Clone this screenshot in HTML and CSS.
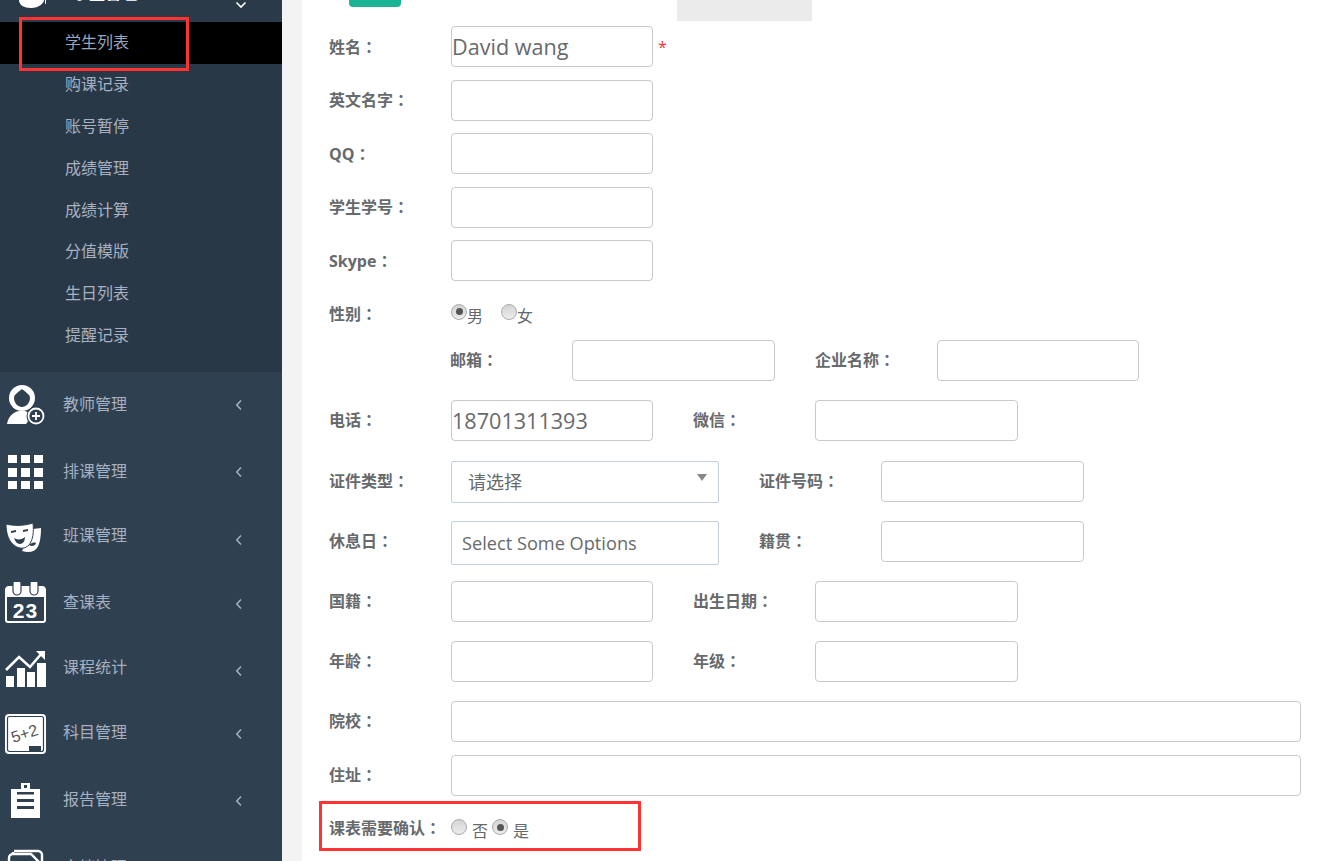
FILE: index.html
```html
<!DOCTYPE html>
<html lang="zh-CN">
<head>
<meta charset="utf-8">
<title>学生列表</title>
<link rel="stylesheet" href="styles.css">
</head>
<body>
<div class="app">
  <nav class="sidebar">
    <div class="head">
      <svg class="head-icon" width="48" height="9" viewBox="0 0 48 9"><path d="M19 0h27v4c0 0-1 0-1-1v-3h-1c0 3-5 8-13 8c-7 0-12-3-12-8z" fill="#fff"/></svg>
      <span class="head-text">学生管理</span>
      <svg class="head-arrow" width="12" height="8" viewBox="0 0 12 8"><path d="M1.5 1.5L6 6l4.5-4.5" fill="none" stroke="#fff" stroke-width="1.6"/></svg>
    </div>
    <ul class="sub">
      <li class="sub-item active">学生列表</li>
      <li class="sub-item">购课记录</li>
      <li class="sub-item">账号暂停</li>
      <li class="sub-item">成绩管理</li>
      <li class="sub-item">成绩计算</li>
      <li class="sub-item">分值模版</li>
      <li class="sub-item">生日列表</li>
      <li class="sub-item">提醒记录</li>
    </ul>
    <ul class="menu">
      <li class="item h67">
        <svg class="ico" viewBox="0 0 48 44"><circle cx="22" cy="15" r="13" fill="#fff"/><path d="M22 6c3 3 8 5 8 9c0 5-4 9-8 9s-8-4-8-9c0-4 5-6 8-9z" fill="#2f4050"/><path d="M7 41c1-7 6-12 12-13h6c4 1 6 3 7 5l-6 8z" fill="#fff"/><circle cx="36" cy="33" r="9.5" fill="#2f4050"/><circle cx="36" cy="33" r="7.5" fill="none" stroke="#fff" stroke-width="1.8"/><path d="M36 29v8M32 33h8" stroke="#fff" stroke-width="1.8"/></svg>
        <span class="item-text">教师管理</span><svg class="arrow" width="8" height="12" viewBox="0 0 8 12"><path d="M6 1.5L1.8 6L6 10.5" fill="none" stroke="#a7b1c2" stroke-width="1.5"/></svg>
      </li>
      <li class="item h67">
        <svg class="ico" viewBox="0 0 48 44"><path d="M8 5h9v8H8zM21 5h9v8h-9zM34 5h9v8h-9zM8 18h9v9H8zM21 18h9v9h-9zM34 18h9v9h-9zM8 31h9v8H8zM21 31h9v8h-9zM34 31h9v8h-9z" fill="#fff"/></svg>
        <span class="item-text">排课管理</span><svg class="arrow" width="8" height="12" viewBox="0 0 8 12"><path d="M6 1.5L1.8 6L6 10.5" fill="none" stroke="#a7b1c2" stroke-width="1.5"/></svg>
      </li>
      <li class="item h65">
        <svg class="ico" viewBox="0 0 48 44"><path d="M33 13l8-1c0 8-1 16-4 20c-3 4-8 5-15 3z" fill="#fff"/><path d="M6 8c8 2 18 2 27-1c1 9 0 17-4 22c-4 4-9 4-14 1c-6-4-9-12-9-22z" fill="#fff" stroke="#2f4050" stroke-width="1"/><path d="M11 15l5-1v2l-5 1zM23 14l5-1v2l-5 1z" fill="#2f4050"/><path d="M14 22c3 2 8 2 11-1c0 4-2 7-5 7s-5-3-6-6z" fill="#2f4050"/><path d="M29 29c2-2 5-3 7-2c-1 3-4 4-7 2z" fill="#2f4050"/></svg>
        <span class="item-text up">班课管理</span><svg class="arrow low" width="8" height="12" viewBox="0 0 8 12"><path d="M6 1.5L1.8 6L6 10.5" fill="none" stroke="#a7b1c2" stroke-width="1.5"/></svg>
      </li>
      <li class="item h67">
        <svg class="ico" viewBox="0 0 48 44"><path d="M8 4h5v-1a2 2 0 0 1 8 0v1h9v-1a2 2 0 0 1 8 0v1h5a4 4 0 0 1 3 3v8H5V7a4 4 0 0 1 3-3z" fill="#fff"/><path d="M13 1v8a4 4 0 0 0 8 0V1M30 1v8a4 4 0 0 0 8 0V1" fill="none" stroke="#2f4050" stroke-width="1.2"/><path d="M6 15v23a2 2 0 0 0 2 2h35a2 2 0 0 0 2-2V15" fill="none" stroke="#fff" stroke-width="2"/><text class="cal-num" x="25.5" y="36" text-anchor="middle">23</text></svg>
        <span class="item-text hi">查课表</span><svg class="arrow" width="8" height="12" viewBox="0 0 8 12"><path d="M6 1.5L1.8 6L6 10.5" fill="none" stroke="#a7b1c2" stroke-width="1.5"/></svg>
      </li>
      <li class="item h63">
        <svg class="ico" viewBox="0 0 48 44"><path d="M6 29h8v11H6zM17 21h8v19h-8zM27 25h8v15H27zM37 16h9v24h-9z" fill="#fff"/><path d="M6 23l13-13l11 10l12-14" fill="none" stroke="#fff" stroke-width="2.6"/><path d="M36 4h9v9z" fill="#fff"/></svg>
        <span class="item-text mid">课程统计</span><svg class="arrow low" width="8" height="12" viewBox="0 0 8 12"><path d="M6 1.5L1.8 6L6 10.5" fill="none" stroke="#a7b1c2" stroke-width="1.5"/></svg>
      </li>
      <li class="item h67">
        <svg class="ico" viewBox="0 0 48 44"><rect x="5" y="2" width="41" height="40" rx="4" fill="#fff"/><rect x="7.5" y="4.500" width="36" height="35" rx="2" fill="none" stroke="#2f4050" stroke-width="1.2"/><text class="board-num" x="25" y="27" text-anchor="middle" transform="rotate(-18 25 23)">5+2</text><rect x="29" y="34" width="12" height="5" fill="#2f4050"/></svg>
        <span class="item-text hi">科目管理</span><svg class="arrow" width="8" height="12" viewBox="0 0 8 12"><path d="M6 1.5L1.8 6L6 10.5" fill="none" stroke="#a7b1c2" stroke-width="1.5"/></svg>
      </li>
      <li class="item h67">
        <svg class="ico" viewBox="0 0 48 44"><path d="M21 4h9v6h10v29H11V10h10z" fill="#fff"/><path d="M24 6h3v3h-3zM17 13h17v2.500H17zM17 20h17v3H17zM17 27h17v3H17z" fill="#2f4050"/></svg>
        <span class="item-text hi">报告管理</span><svg class="arrow" width="8" height="12" viewBox="0 0 8 12"><path d="M6 1.5L1.8 6L6 10.5" fill="none" stroke="#a7b1c2" stroke-width="1.5"/></svg>
      </li>
      <li class="item h67">
        <svg class="ico" viewBox="0 0 48 44"><path d="M13 6V8M14 5h24a4 4 0 0 1 4 4v30" fill="none" stroke="#fff" stroke-width="2.400"/><path d="M9 14v-2a4 4 0 0 1 4-4h18l7 7v28H9z" fill="none" stroke="#fff" stroke-width="2.400"/></svg>
        <span class="item-text">文档管理</span>
      </li>
    </ul>
    <div class="mark mark-nav"></div>
  </nav>
  <div class="gutter"></div>
  <main class="main">
    <div class="topbar">
      <div class="tab-green"></div>
      <div class="tab-grey"></div>
    </div>
    <form class="form">
      <div class="group-a">
        <div class="row"><span class="lab">姓名<span class="c">：</span></span><div class="field big">David wang</div><span class="req">*</span></div>
        <div class="row"><span class="lab">英文名字<span class="c">：</span></span><input class="field" type="text"></div>
        <div class="row"><span class="lab">QQ<span class="c">：</span></span><input class="field" type="text"></div>
        <div class="row"><span class="lab">学生学号<span class="c">：</span></span><input class="field" type="text"></div>
        <div class="row"><span class="lab">Skype<span class="c">：</span></span><input class="field" type="text"></div>
        <div class="row gender">
          <span class="lab">性别<span class="c">：</span></span>
          <span class="radio on"></span><span class="rtext">男</span>
          <span class="radio second"></span><span class="rtext">女</span>
        </div>
      </div>
      <div class="group-b">
        <div class="row indent"><span class="lab">邮箱<span class="c">：</span></span><input class="field ctl w203" type="text"><span class="lab">企业名称<span class="c">：</span></span><input class="field" type="text"></div>
        <div class="row mt3"><span class="lab">电话<span class="c">：</span></span><div class="field big ctl">18701311393</div><span class="lab">微信<span class="c">：</span></span><input class="field w203" type="text"></div>
        <div class="row r-sel"><span class="lab">证件类型<span class="c">：</span></span><div class="select ctl">请选择<span class="caret"></span></div><span class="lab">证件号码<span class="c">：</span></span><input class="field w203" type="text"></div>
        <div class="row r-cho"><span class="lab">休息日<span class="c">：</span></span><div class="chosen ctl">Select Some Options</div><span class="lab">籍贯<span class="c">：</span></span><input class="field w203" type="text"></div>
        <div class="row"><span class="lab">国籍<span class="c">：</span></span><input class="field ctl" type="text"><span class="lab">出生日期<span class="c">：</span></span><input class="field w203" type="text"></div>
        <div class="row mt3"><span class="lab">年龄<span class="c">：</span></span><input class="field ctl" type="text"><span class="lab">年级<span class="c">：</span></span><input class="field w203" type="text"></div>
      </div>
      <div class="group-c">
        <div class="row"><span class="lab">院校<span class="c">：</span></span><input class="field wide" type="text"></div>
        <div class="row"><span class="lab">住址<span class="c">：</span></span><input class="field wide" type="text"></div>
      </div>
      <div class="row confirm">
        <span class="lab">课表需要确认<span class="c">：</span></span>
        <span class="radio"></span><span class="rtext gap">否</span>
        <span class="radio on"></span><span class="rtext gap">是</span>
      </div>
    </form>
    <div class="mark mark-form"></div>
  </main>
</div>
</body>
</html>
```

FILE: styles.css
```css
* { box-sizing: border-box; }
html, body { margin: 0; padding: 0; background: #fff; }
body { font-family: "Open Sans", "Noto Sans CJK SC", sans-serif; color: #676a6c; }
ul { list-style: none; margin: 0; padding: 0; }

.app { display: flex; width: 1337px; height: 861px; overflow: hidden; position: relative; }

.sidebar { width: 282px; flex: none; background: #2f4050; height: 861px; overflow: hidden; }
.head { height: 22px; overflow: hidden; display: flex; align-items: flex-start; background: #2b3a49; }
.head-icon { flex: none; display: block; }
.head-text { margin: -15px 0 0 25px; font-size: 16px; line-height: 16px; font-weight: 700; color: #fff; width: 64px; white-space: nowrap; }
.head-arrow { margin: 1px 0 0 98px; flex: none; }

.sub { background: #293846; padding-bottom: 14.800px; }
.sub-item { height: 41.900px; line-height: 39.600px; padding-left: 65px; font-size: 16px; color: #a7b1c2; font-family: "Noto Sans CJK SC", sans-serif; }
.sub-item.active { background: #000; color: #98a6bd; }

.item { display: flex; align-items: center; color: #a7b1c2; }
.h67 { height: 67px; }
.h65 { height: 65px; }
.h63 { height: 63px; }
.ico { width: 48px; height: 44px; flex: none; }
.item-text { width: 172px; margin-left: 15px; margin-bottom: 5px; font-size: 16px; line-height: 24px; font-family: "Noto Sans CJK SC", sans-serif; }
.item-text.up { margin-bottom: 8px; }
.item-text.mid { margin-bottom: 6px; }
.item-text.hi { margin-bottom: 7px; }
.arrow { flex: none; }
.arrow.low { margin-top: 3px; }
.cal-num { font: 700 21px "Liberation Sans", sans-serif; fill: #fff; letter-spacing: 1px; }
.board-num { font: 400 16px "Liberation Sans", sans-serif; fill: #555; }

.gutter { width: 20px; flex: none; background: #f3f3f4; }
.main { flex: 1; background: #fff; min-width: 0; }

.topbar { height: 26px; display: flex; align-items: flex-start; padding-left: 47px; }
.tab-green { width: 52px; height: 7px; background: #1ab394; border-radius: 0 0 4px 4px; }
.tab-grey { width: 135px; height: 21px; margin-left: 276px; background: #ebebeb; }

.form { padding-left: 28px; }
.row { display: flex; align-items: center; height: 41px; }
.group-a { display: flex; flex-direction: column; gap: 12.500px; margin-bottom: 13px; }
.group-b { display: flex; flex-direction: column; gap: 16px; }
.group-c { display: flex; flex-direction: column; gap: 13px; margin-top: 19px; }
.mt3 { margin-top: 3px; }
.r-sel { height: 42px; margin-top: 4px; }
.r-cho { height: 44px; margin-top: 2px; }
.r-sel .lab { margin-bottom: 3px; }
.r-cho .lab { margin-bottom: 4px; }
.r-cho .field { align-self: flex-start; }

.lab { width: 121px; flex: none; font-size: 16px; line-height: 24px; font-weight: 700; color: #676a6c; margin-bottom: 1px; white-space: nowrap; text-indent: -1px; }
.c { font-family: "Noto Sans CJK TC", sans-serif; font-feature-settings: "locl" 0; }
.field { display: block; width: 202px; height: 41px; flex: none; border: 1px solid #c9c9c9; border-radius: 4px; background: #fff; padding: 0; outline: 0; }
.w203 { width: 203px; }
.big { font-size: 21.600px; line-height: 39px; color: #676a6c; white-space: nowrap; }
.wide { width: 850px; }
.ctl { margin-right: 41px; }
.req { margin-left: 5px; font-size: 16px; line-height: 16px; color: #f33; }
.indent { margin-left: 121px; }

.gender { height: 33px; align-items: flex-start; padding-top: 10px; }
.gender .lab { margin-top: -3px; }

.select { position: relative; width: 268px; height: 42px; flex: none; border: 1px solid #c5d0dc; border-radius: 2px; padding-left: 16px; font-size: 18px; line-height: 41px; color: #676a6c; background: #fff; }
.caret { position: absolute; right: 11px; top: 12px; border-left: 5px solid transparent; border-right: 5px solid transparent; border-top: 7px solid #888; }
.chosen { width: 268px; height: 44px; flex: none; border: 1px solid #c5d0dc; border-radius: 2px; padding-left: 10px; font-size: 18.200px; line-height: 42px; color: #676a6c; background: #fff; white-space: nowrap; }

.radio { display: block; width: 16px; height: 16px; flex: none; border-radius: 50%; border: 1px solid #aaa; background: linear-gradient(#d4d4d4, #ececec); position: relative; }
.radio.on::after { content: ""; position: absolute; left: 3.500px; top: 3.500px; width: 7px; height: 7px; border-radius: 50%; background: #555; }
.radio.second { margin-left: 18px; }
.rtext { font-size: 16px; line-height: 18px; font-family: "Noto Sans CJK SC", sans-serif; color: #676a6c; margin-top: 2px; white-space: nowrap; }

.confirm { height: 40px; margin-top: 13px; }
.confirm .lab { margin-bottom: 3px; }
.confirm .radio { margin-bottom: 3px; }
.confirm .rtext { margin-top: 2px; }
.confirm .gap { margin-left: 5px; margin-right: 4px; }

.mark { position: absolute; border: 3px solid #f33; pointer-events: none; }
.mark-nav { left: 19px; top: 17px; width: 170px; height: 54px; }
.mark-form { left: 319px; top: 801px; width: 322px; height: 50px; }
```
